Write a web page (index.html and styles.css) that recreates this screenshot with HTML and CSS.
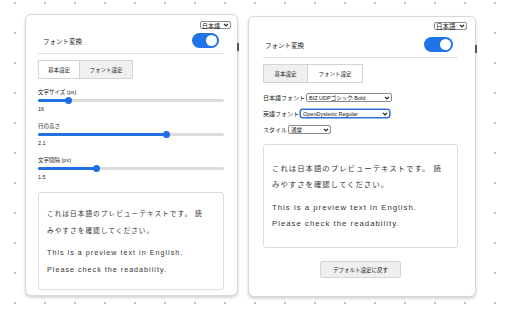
FILE: index.html
```html
<!DOCTYPE html>
<html lang="ja">
<head>
<meta charset="utf-8">
<title>フォント変換</title>
<link rel="stylesheet" href="styles.css">
</head>
<body>
<div class="stage">
  <section class="panel panel-a">
    <span class="mark"></span>
    <div class="lang-row">
      <span class="select sel-lang">日本語<svg class="chev" viewBox="0 0 7 5"><polyline points="1,1 3.5,3.6 6,1"/></svg></span>
    </div>
    <div class="head">
      <span class="title">フォント変換</span>
      <span class="toggle"><span class="knob"></span></span>
    </div>
    <div class="tabs">
      <span class="tab tab-a1 active">基本設定</span>
      <span class="tab tab-a2">フォント設定</span>
    </div>
    <div class="fields">
      <div class="field">
        <div class="label">文字サイズ (px)</div>
        <div class="slider"><div class="track"><div class="fill" style="width:16.2%"></div></div><span class="thumb" style="left:16.2%"></span></div>
        <div class="value">16</div>
      </div>
      <div class="field">
        <div class="label">行の高さ</div>
        <div class="slider"><div class="track"><div class="fill" style="width:69.2%"></div></div><span class="thumb" style="left:69.2%"></span></div>
        <div class="value">2.1</div>
      </div>
      <div class="field">
        <div class="label">文字間隔 (px)</div>
        <div class="slider"><div class="track"><div class="fill" style="width:31.4%"></div></div><span class="thumb" style="left:31.4%"></span></div>
        <div class="value">1.5</div>
      </div>
    </div>
    <div class="preview preview-a">
      <p class="jp">これは日本語のプレビューテキストです。 読<br>みやすさを確認してください。</p>
      <p class="en" lang="en">This is a preview text in English.<br>Please check the readability.</p>
    </div>
  </section>

  <section class="panel panel-b">
    <span class="mark"></span>
    <div class="lang-row">
      <span class="select sel-lang">日本語<svg class="chev" viewBox="0 0 7 5"><polyline points="1,1 3.5,3.6 6,1"/></svg></span>
    </div>
    <div class="head">
      <span class="title">フォント変換</span>
      <span class="toggle"><span class="knob"></span></span>
    </div>
    <div class="tabs">
      <span class="tab tab-b1">基本設定</span>
      <span class="tab tab-b2 active">フォント設定</span>
    </div>
    <div class="rows">
      <div class="row"><span class="rlabel">日本語フォント</span><span class="select sel-jp">BIZ UDPゴシック Bold<svg class="chev" viewBox="0 0 7 5"><polyline points="1,1 3.5,3.6 6,1"/></svg></span></div>
      <div class="row"><span class="rlabel">英語フォント</span><span class="select sel-en focus">OpenDyslexic Regular<svg class="chev" viewBox="0 0 7 5"><polyline points="1,1 3.5,3.6 6,1"/></svg></span></div>
      <div class="row"><span class="rlabel">スタイル</span><span class="select sel-style">通常<svg class="chev" viewBox="0 0 7 5"><polyline points="1,1 3.5,3.6 6,1"/></svg></span></div>
    </div>
    <div class="preview preview-b">
      <p class="jp">これは日本語のプレビューテキストです。 読<br>みやすさを確認してください。</p>
      <p class="en" lang="en">This is a preview text in English.<br>Please check the readability.</p>
    </div>
    <div class="btn-row"><span class="btn">デフォルト設定に戻す</span></div>
  </section>
</div>
</body>
</html>
```
FILE: styles.css
```css
html, body {
  margin: 0;
  padding: 0;
}
body {
  width: 512px;
  height: 320px;
  overflow: hidden;
  background-color: #ffffff;
  background-image: radial-gradient(circle, #c2c2c2 0.9px, rgba(255,255,255,0) 1.4px);
  background-size: 30px 30px;
  background-position: 0 -12px;
  font-family: "Liberation Sans", "Noto Sans CJK JP", sans-serif;
  color: #222;
}
.stage {
  display: flex;
  align-items: flex-start;
  gap: 10px;
  padding: 14px 0 0 25px;
}
.panel {
  position: relative;
  box-sizing: border-box;
  background: #fff;
  border: 1px solid #d9d9d9;
  border-radius: 6px;
  box-shadow: 0 2px 3px rgba(0,0,0,0.16), 0 0 1px rgba(0,0,0,0.08);
  display: flex;
  flex-direction: column;
}
.panel-a {
  width: 213px;
  height: 282px;
  padding: 6px 13px 0 12px;
}
.panel-b {
  width: 228px;
  height: 281px;
  margin-top: 2px;
  padding: 5px 17px 0 14px;
}
.mark {
  position: absolute;
  right: -2px;
  top: 28px;
  width: 2px;
  height: 8px;
  background: #555;
}
.lang-row {
  display: flex;
  justify-content: flex-end;
}
.panel-a .lang-row { margin-right: -7px; }
.panel-b .lang-row { margin-right: -9px; }

.select {
  box-sizing: border-box;
  display: flex;
  align-items: center;
  justify-content: space-between;
  border: 1px solid #8c8c8c;
  border-radius: 2px;
  background: #fff;
  color: #111;
  font-size: 5.5px;
  padding: 0 1px 0 2px;
  white-space: nowrap;
}
.chev {
  width: 6px;
  height: 4px;
  flex: none;
  fill: none;
  stroke: #222;
  stroke-width: 1.5;
}
.panel-a .sel-lang {
  width: 31px;
  height: 8px;
  font-size: 6px;
  padding-left: 1px;
}
.panel-b .sel-lang {
  width: 33px;
  height: 8px;
  font-size: 6.5px;
  padding-left: 1px;
}

.head {
  display: flex;
  align-items: center;
  justify-content: space-between;
  border-bottom: 1px solid #dedede;
}
.panel-a .head {
  margin-top: 4px;
  padding: 0 5px 5px 5px;
}
.panel-b .head {
  margin-top: 7px;
  padding: 0 5px 5px 2px;
}
.title {
  font-size: 6.5px;
  color: #222;
}
.toggle {
  box-sizing: border-box;
  display: flex;
  justify-content: flex-end;
  align-items: center;
  background: #1f74e8;
  border-radius: 8px;
  padding: 0 2px;
}
.panel-a .toggle { width: 27px; height: 15px; }
.panel-b .toggle { width: 29px; height: 15px; }
.knob {
  width: 11px;
  height: 11px;
  border-radius: 50%;
  background: #fff;
}

.tabs {
  display: flex;
  margin-top: 6px;
}
.tab {
  box-sizing: border-box;
  height: 19px;
  display: flex;
  align-items: center;
  justify-content: center;
  border: 1px solid #d4d4d4;
  background: #f0f0f0;
  font-size: 5.5px;
  color: #222;
}
.tab + .tab { margin-left: -1px; }
.tab.active { background: #fff; }
.tab-a1 { width: 42px; }
.tab-a2 { width: 54px; }
.tab-b1 { width: 45px; }
.tab-b2 { width: 56px; }

.fields {
  display: flex;
  flex-direction: column;
  gap: 8px;
  margin-top: 9px;
}
.label {
  font-size: 5.5px;
  line-height: 8px;
  color: #222;
}
.slider {
  position: relative;
  height: 9px;
  display: flex;
  align-items: center;
}
.track {
  width: 100%;
  height: 3px;
  border-radius: 2px;
  background: #dcdcdc;
  overflow: hidden;
}
.fill {
  height: 100%;
  background: #1f6fe5;
}
.thumb {
  position: absolute;
  top: 1px;
  width: 7px;
  height: 7px;
  margin-left: -3.5px;
  border-radius: 50%;
  background: #1f6fe5;
}
.value {
  font-size: 5.5px;
  line-height: 9px;
  color: #222;
}

.rows {
  display: flex;
  flex-direction: column;
  gap: 7px;
  margin-top: 10px;
}
.row {
  display: flex;
  align-items: center;
  gap: 1px;
  height: 9px;
}
.rlabel {
  font-size: 6px;
  color: #222;
  white-space: nowrap;
}
.row .select { height: 9px; }
.sel-jp { width: 86px; }
.sel-en { width: 90px; }
.sel-style { width: 43px; }
.select.focus {
  border-color: #2f6fd8;
  border-radius: 2.5px;
  box-shadow: 0 0 0 0.5px #2f6fd8;
}

.preview {
  box-sizing: border-box;
  border: 1px solid #dcdcdc;
  border-radius: 3px;
  color: #333;
}
.preview p { margin: 0; }
.preview-a {
  margin-top: 10px;
  height: 98px;
  padding: 12px 8px;
  line-height: 17px;
  letter-spacing: 1px;
}
.preview-a .jp { font-size: 6.7px; }
.preview-a .en { font-size: 7.2px; margin-top: 5px; }
.preview-b {
  margin-top: 10px;
  height: 104px;
  padding: 16px 8px 14px;
  line-height: 16px;
  letter-spacing: 1px;
}
.preview-b .jp { font-size: 7.4px; }
.preview-b .en { font-size: 7.8px; margin-top: 7px; }

.btn-row {
  display: flex;
  justify-content: center;
  margin-top: 13px;
}
.btn {
  box-sizing: border-box;
  width: 81px;
  height: 17px;
  display: flex;
  align-items: center;
  justify-content: center;
  background: #efefef;
  border: 1px solid #d6d6d6;
  border-radius: 2px;
  font-size: 5.5px;
  color: #222;
}
```
